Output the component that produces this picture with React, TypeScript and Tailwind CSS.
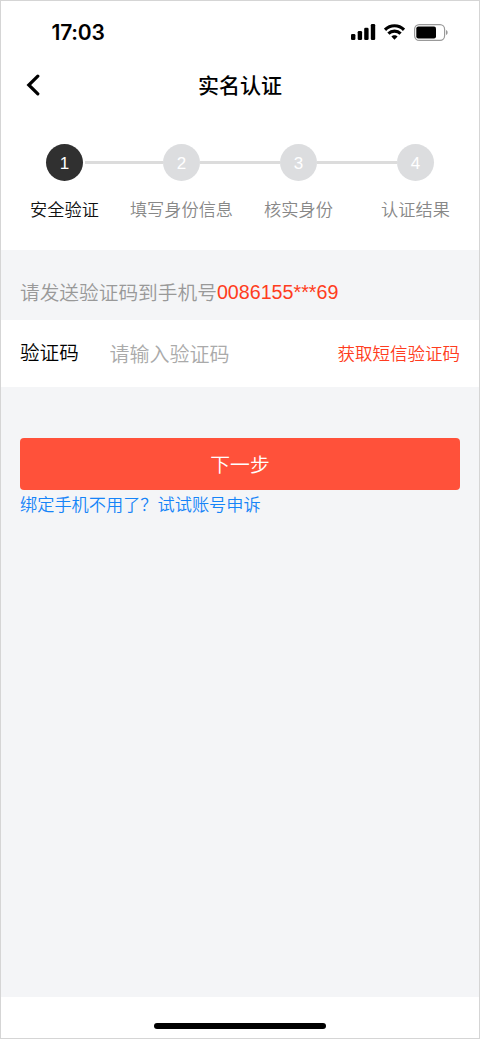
import { useState } from 'react';

const steps = ['安全验证', '填写身份信息', '核实身份', '认证结果'];

function StatusBar() {
  return (
    <div className="flex h-[62px] items-center justify-between pl-[50.5px] pr-[31px]">
      <span className="font-['Inter'] text-[21px] font-semibold leading-none tracking-[-0.2px]">17:03</span>
      <div className="flex items-center">
        <svg width="25" height="16" viewBox="0 0 25 16" fill="currentColor">
          <rect x="0" y="10" width="4.4" height="6" rx="1.3" />
          <rect x="6.7" y="7" width="4.4" height="9" rx="1.3" />
          <rect x="13.2" y="3.7" width="4.4" height="12.3" rx="1.3" />
          <rect x="19.8" y="0" width="4.4" height="16" rx="1.3" />
        </svg>
        <svg className="ml-2" width="21" height="16" viewBox="0 0 21 16" fill="none" stroke="currentColor" strokeWidth="3.1">
          <path d="M1 5.8C6.2.4 14.8.4 20 5.8" />
          <path d="M4.4 9.7C7.8 6.3 13.2 6.3 16.6 9.7" />
          <path d="M7.4 12.6C9.1 10.7 11.9 10.7 13.6 12.6L10.5 15.8Z" fill="currentColor" stroke="none" />
        </svg>
        <svg className="ml-[9px]" width="34" height="17" viewBox="0 0 34 17">
          <rect x="0.6" y="0.6" width="30" height="15.8" rx="4.6" fill="none" stroke="#999" strokeWidth="1.2" />
          <rect x="2.3" y="2.5" width="19.7" height="12" rx="2" fill="currentColor" />
          <path d="M32 6c2.2.8 2.2 4.2 0 5z" fill="#999" />
        </svg>
      </div>
    </div>
  );
}

export default function App() {
  const [code, setCode] = useState('');
  const [current] = useState(0);

  return (
    <div className="flex h-[1039px] w-[480px] flex-col border border-[#d5d5d5] bg-white font-['Liberation_Sans','Noto_Sans_CJK_SC',sans-serif] text-black">
      <StatusBar />
      <header className="grid h-11 grid-cols-[1fr_auto_1fr] items-center px-[25px]">
        <button type="button" aria-label="返回" className="w-fit">
          <svg width="14" height="22" viewBox="0 0 14 22" fill="none" stroke="currentColor" strokeWidth="3.2" strokeLinecap="round">
            <path d="M11.8 2.2 2.8 11 11.8 19.8" />
          </svg>
        </button>
        <h1 className="text-[21px] font-medium leading-none">实名认证</h1>
      </header>

      <ol className="flex h-[143px] px-[5px] pt-[37px]">
        {steps.map((label, index) => (
          <li key={label} className="flex w-[117px] flex-col items-center">
            <div className="flex w-full items-center">
              <span className={index === 0 ? 'h-[3px] flex-1' : 'h-[3px] flex-1 bg-[#dcdcdc]'} />
              <span
                className={
                  index === current
                    ? 'flex size-[37px] items-center justify-center rounded-full bg-[#303030] pt-[2px] text-[17px] text-white'
                    : 'flex size-[37px] items-center justify-center rounded-full bg-[#dcdddf] pt-[2px] text-[17px] text-white'
                }
              >
                {index + 1}
              </span>
              <span className="h-[3px] flex-1">
                {index < steps.length - 1 && (
                  <span className={index === current ? 'ml-[2px] block h-full bg-[#dcdcdc]' : 'block h-full bg-[#dcdcdc]'} />
                )}
              </span>
            </div>
            <span
              className={
                index === current
                  ? 'mt-4 whitespace-nowrap text-[17.2px] font-[350] leading-[26px] text-[#111]'
                  : 'mt-4 whitespace-nowrap text-[17.2px] font-[350] leading-[26px] text-[#888]'
              }
            >
              {label}
            </span>
          </li>
        ))}
      </ol>

      <main className="flex flex-1 flex-col bg-[#f4f5f7]">
        <p className="flex h-[70px] items-end px-[19px] pb-3 text-[19.7px] leading-[30px] text-[#999]">
          <span className="font-[350]">请发送验证码到手机号</span>
          <span className="pb-px text-[#ff3c20]">0086155***69</span>
        </p>
        <div className="flex h-[67px] items-center bg-white px-[19px]">
          <label htmlFor="code" className="w-[89.5px] text-[19.6px] font-[350]">验证码</label>
          <input
            id="code"
            type="text"
            value={code}
            placeholder="请输入验证码"
            className="min-w-0 flex-1 pt-[2px] text-[20px] font-[350] outline-none placeholder:text-[#aaa]"
            onChange={(e) => setCode(e.target.value)}
          />
          <button type="button" className="pt-[2px] text-[17.5px] font-[350] text-[#ff3c20]">获取短信验证码</button>
        </div>
        <div className="px-[19px] pt-[51px]">
          <button type="button" className="block h-[52px] w-full rounded bg-[#ff513a] pt-1 text-[19.8px] font-[350] text-white">
            下一步
          </button>
          <a href="#" className="mt-[2px] block w-fit text-[17.2px] font-[350] leading-[26px] text-[#1684f8]">
            绑定手机不用了？试试账号申诉
          </a>
        </div>
      </main>

      <footer className="flex h-[41px] items-end justify-center pb-[9px]">
        <div className="h-[6px] w-[172px] rounded-full bg-black" />
      </footer>
    </div>
  );
}
